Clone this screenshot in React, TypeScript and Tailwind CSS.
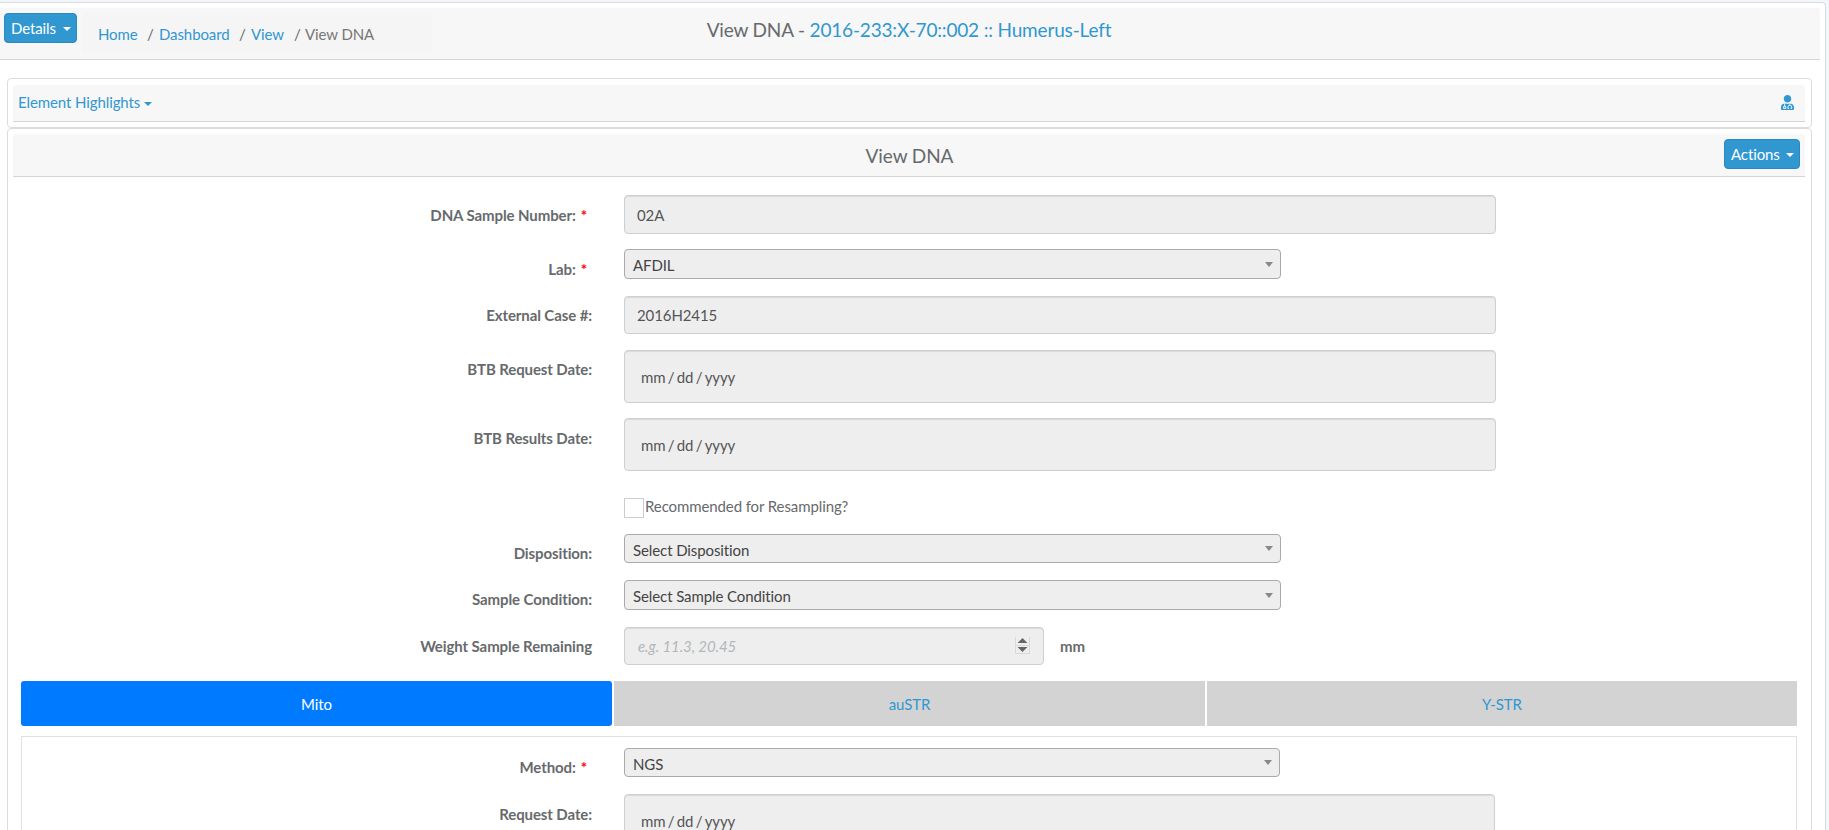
import type { ReactNode } from "react";
import { FaUserMd } from "react-icons/fa";

function Caret({ className }: { className: string }) {
  return (
    <svg viewBox="0 0 8 4" preserveAspectRatio="none" className={`w-2 ${className}`} fill="currentColor">
      <path d="M0 0h8L4 4z" />
    </svg>
  );
}

function Field({ label, required, className, labelClass = "pt-[9px]", children }: { label?: string; required?: boolean; className: string; labelClass?: string; children: ReactNode }) {
  return (
    <div className={`flex items-start ${className}`}>
      <div className={`flex w-[592px] shrink-0 justify-end font-bold text-[#676a6c] ${labelClass}`}>
        <span>{label}</span>
        {required && <span className="mr-[5px] ml-[5px] text-[#ff0000]">*</span>}
      </div>
      <div className="ml-8 flex">{children}</div>
    </div>
  );
}

function Select({ value, className }: { value: string; className: string }) {
  return (
    <div className={`flex items-center justify-between rounded-[4px] border border-[#aaa] bg-[#eee] pr-[7px] pl-2 text-[#444] ${className}`}>
      <span className="pt-[2px]">{value}</span>
      <Caret className="h-[5px] text-[#888]" />
    </div>
  );
}

function Input({ className, children }: { className: string; children: ReactNode }) {
  return (
    <div className={`flex items-center rounded-[4px] border border-[#ccd0d2] bg-[#eee] px-3 text-[#555] shadow-[inset_0_1px_1px_rgba(0,0,0,0.09)] ${className}`}>
      {children}
    </div>
  );
}

function DateInput({ className }: { className: string }) {
  return (
    <Input className={`h-[53px] ${className}`}>
      <span className="flex gap-[2.3px] pl-1">
        <span>mm</span>
        <span>/</span>
        <span>dd</span>
        <span>/</span>
        <span>yyyy</span>
      </span>
    </Input>
  );
}

function MenuButton({ children, className }: { children: string; className: string }) {
  return (
    <button className={`flex h-[30px] items-center justify-between rounded-[4px] border border-[#2a88bd] bg-[#3097d1] pr-[5px] pl-[6px] text-white ${className}`}>
      {children}
      <Caret className="mt-[2px] h-1" />
    </button>
  );
}

export default function App() {
  return (
    <div className="h-[830px] w-[1829px] overflow-hidden bg-[#f3f7fb] pt-[2px] font-['Lato',sans-serif] text-[15px] leading-5 tracking-[-0.1px] text-[#676a6c]">
      <div className="h-[840px] w-[1826px] rounded-tr-[4px] border-t border-r border-[#d9dbdd] bg-white pt-[5px]">
        <header className="grid h-[52px] w-[1820px] grid-cols-[605px_1fr_605px] items-start rounded-tr-[3px] border-b border-[#d5d5d5] bg-[#f7f7f7] pt-[5px]">
          <div className="flex pl-1">
            <MenuButton className="w-[73px]">Details</MenuButton>
            <nav className="ml-[5px] flex h-10 w-[350px] items-center rounded-[4px] bg-[#f5f5f5] pl-4 pt-[2px]">
              <a className="w-[49px] text-[#3097d1]">Home</a>
              <span className="w-[12px]">/</span>
              <a className="w-[80px] text-[#3097d1]">Dashboard</a>
              <span className="w-[12px]">/</span>
              <a className="w-[43px] text-[#3097d1]">View</a>
              <span className="w-[11px]">/</span>
              <span className="text-[#777]">View DNA</span>
            </nav>
          </div>
          <h1 className="pt-[5px] pr-[2px] text-center text-[19px] leading-6 tracking-[-0.17px]">
            View DNA - <a className="text-[#3097d1]">2016-233:X-70::002 :: Humerus-Left</a>
          </h1>
        </header>

        <section className="mt-[18px] ml-[7px] h-[50px] w-[1805px] rounded-[4px] border border-[#dcdcdc] pt-[6px] pr-[6px] pl-[5px]">
          <div className="flex h-[37px] items-center justify-between rounded-t-[3px] border-b border-[#d5d5d5] bg-[#f7f7f7] pr-[10px] pb-[2px] pl-[5px] text-[#3097d1]">
            <span className="flex items-center gap-1">
              Element Highlights <Caret className="mt-[4px] h-1" />
            </span>
            <FaUserMd size={15} />
          </div>
        </section>

        <section className="ml-[7px] h-[720px] w-[1805px] rounded-[4px] border border-[#dcdcdc]">
          <div className="mt-[5px] mr-[6px] ml-[5px] grid h-[43px] grid-cols-[1fr_auto_1fr] items-start rounded-t-[3px] border-b border-[#d5d5d5] bg-[#f7f7f7] pt-[5px] pr-[5px]">
            <h2 className="col-start-2 pt-[5px] pl-[6px] text-[19px] leading-6 tracking-[-0.1px]">View DNA</h2>
            <div className="flex justify-end">
              <MenuButton className="w-[76px]">Actions</MenuButton>
            </div>
          </div>

          <div className="-ml-2 w-[1813px]">
            <Field label="DNA Sample Number:" required labelClass="pt-[10px]" className="mt-[18px] h-[54px]">
              <Input className="h-[39px] w-[872px]">
                <span className="pt-px">02A</span>
              </Input>
            </Field>
            <Field label="Lab:" required labelClass="pt-[10px]" className="h-[47px]">
              <Select value="AFDIL" className="h-[30px] w-[657px]" />
            </Field>
            <Field label="External Case #:" className="h-[54px]">
              <Input className="h-[38px] w-[872px]">2016H2415</Input>
            </Field>
            <Field label="BTB Request Date:" className="h-[68px]">
              <DateInput className="w-[872px]" />
            </Field>
            <Field label="BTB Results Date:" labelClass="pt-[10px]" className="h-[80px]">
              <DateInput className="w-[872px]" />
            </Field>
            <Field className="h-[36px]">
              <label className="flex items-start gap-[1px]">
                <span className="size-5 border border-[#ccc] bg-white" />
                <span className="-mt-[2px]">Recommended for Resampling?</span>
              </label>
            </Field>
            <Field label="Disposition:" className="h-[46px]">
              <Select value="Select Disposition" className="h-[29px] w-[657px]" />
            </Field>
            <Field label="Sample Condition:" className="h-[47px]">
              <Select value="Select Sample Condition" className="h-[30px] w-[657px]" />
            </Field>
            <Field label="Weight Sample Remaining" className="h-[54px]">
              <Input className="h-[38px] w-[420px] justify-between">
                <span className="pl-px text-[#b1b7ba] italic">e.g. 11.3, 20.45</span>
                <svg viewBox="0 0 15 17" className="mr-px mb-[2px] h-[17px] w-[15px]">
                  <path d="M.5 0v16.5h14V0M0 8.5h15" fill="none" stroke="#d9d9d9" />
                  <path d="M2.5 6h10L7.5 1zM2.5 10h10L7.5 15z" fill="#666" />
                </svg>
              </Input>
              <span className="ml-4 pt-[9px] font-bold">mm</span>
            </Field>
          </div>

          <div className="ml-[13px] grid h-[45px] w-[1776px] grid-cols-[591px_591px_590px] gap-[2px] text-[#3097d1]">
            <a className="flex items-center justify-center rounded-[3px] bg-[#007bff] text-white">Mito</a>
            <a className="flex items-center justify-center bg-[#d3d3d3]">auSTR</a>
            <a className="flex items-center justify-center bg-[#d3d3d3]">Y-STR</a>
          </div>

          <div className="mt-[10px] ml-[13px] h-[110px] w-[1776px] border border-[#dee2e6]">
            <div className="-ml-[22px] w-[1790px] pt-[11px]">
              <Field label="Method:" required className="h-[46px]">
                <Select value="NGS" className="h-[29px] w-[656px]" />
              </Field>
              <Field label="Request Date:" labelClass="pt-[10px]" className="h-[60px]">
                <DateInput className="w-[871px]" />
              </Field>
            </div>
          </div>
        </section>
      </div>
    </div>
  );
}
